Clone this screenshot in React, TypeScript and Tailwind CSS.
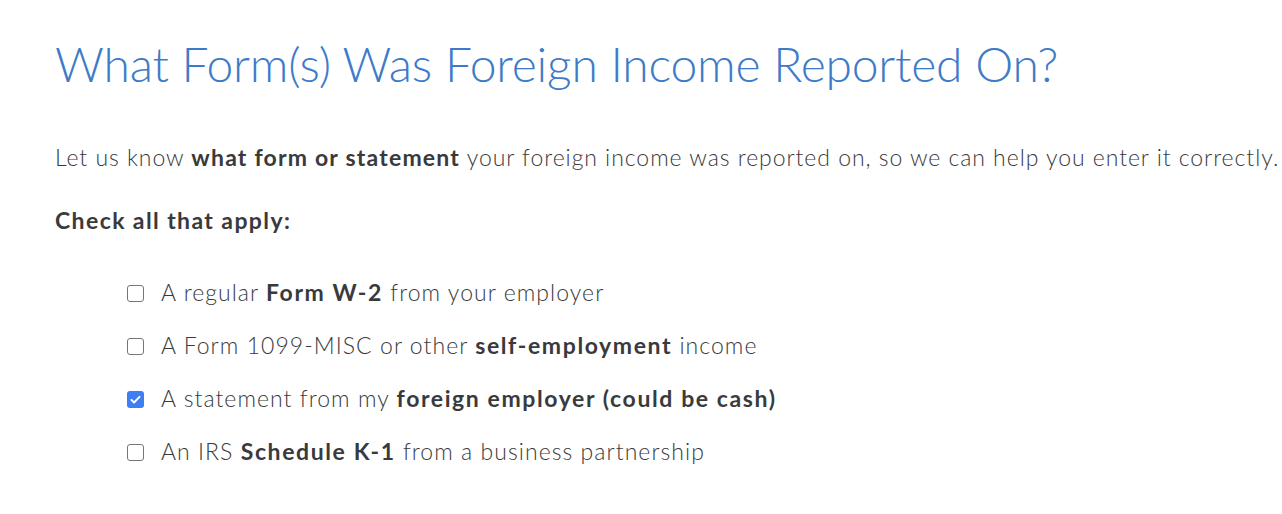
const options = [
  { pre: "A regular ", bold: "Form W-2", post: " from your employer", checked: false },
  { pre: "A Form 1099-MISC or other ", bold: "self-employment", post: " income", checked: false },
  { pre: "A statement from my ", bold: "foreign employer (could be cash)", post: "", checked: true },
  { pre: "An IRS ", bold: "Schedule K-1", post: " from a business partnership", checked: false },
];

const Checkbox = ({ checked }: { checked: boolean }) =>
  checked ? (
    <span className="w-[17px] h-[17px] rounded-[3px] bg-[#3e7df2] flex items-center justify-center flex-shrink-0">
      <svg viewBox="0 0 16 16" className="w-[13px] h-[13px]" fill="none">
        <path d="M3 8.5l3.2 3.2L13 4.8" stroke="white" strokeWidth="2.4" strokeLinecap="round" strokeLinejoin="round" />
      </svg>
    </span>
  ) : (
    <span className="w-[17px] h-[17px] rounded-[3px] border-[1.5px] border-[#767676] bg-white flex-shrink-0" />
  );

export default function App() {
  return (
    <div className="w-[1282px] h-[514px] bg-white overflow-hidden font-['Lato',sans-serif] text-[#393a3d]">
      <div className="pl-[55px] pt-[35px] whitespace-nowrap">
        <h1 className="text-[48px] leading-[1.2] text-[#3d7bc8] font-light tracking-[-0.2px]">
          What Form(s) Was Foreign Income Reported On?
        </h1>

        <p className="mt-[51px] text-[23px] leading-[1.2] font-light tracking-[0.95px]">
          Let us know <strong className="font-bold tracking-[1.2px]">what form or statement</strong> your foreign
          income was reported on, so we can help you enter it correctly.
        </p>

        <p className="mt-[36px] text-[23px] leading-[1.2] font-bold tracking-[1.4px]">Check all that apply:</p>

        <ul className="mt-[32px] pl-[72px]">
          {options.map((o, i) => (
            <li key={i} className="h-[53px] flex items-center gap-[17px]">
              <Checkbox checked={o.checked} />
              <span className="text-[23px] leading-[1.2] font-light tracking-[1.05px]">
                {o.pre}
                <strong className="font-bold tracking-[1.6px]">{o.bold}</strong>
                {o.post}
              </span>
            </li>
          ))}
        </ul>
      </div>
    </div>
  );
}
